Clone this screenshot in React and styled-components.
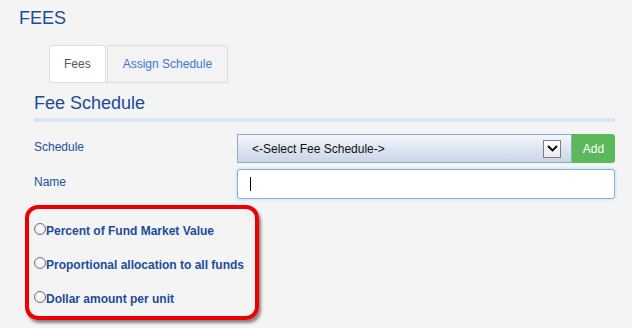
import React from 'react';
import styled, { createGlobalStyle } from 'styled-components';

const Global = createGlobalStyle`
  html, body {
    margin: 0;
    padding: 0;
    background: #f4f4f4;
    font-family: "Liberation Sans", Arial, sans-serif;
  }
`;

const Page = styled.div`
  width: 632px;
  height: 328px;
  padding-top: 8px;
  box-sizing: border-box;
  background: #f4f4f4;
  overflow: hidden;
`;

const Title = styled.h1`
  margin: 0 0 0 19px;
  font-size: 18px;
  line-height: 20px;
  font-weight: normal;
  color: #1b4b9b;
`;

const Tabs = styled.div`
  display: flex;
  gap: 1px;
  margin: 17px 0 0 49px;
`;

const Tab = styled.div`
  height: 38px;
  box-sizing: border-box;
  padding: 0 ${p => (p.active ? 14 : 15)}px;
  display: flex;
  align-items: center;
  font-size: 12px;
  border: 1px solid #dcdcdc;
  border-radius: 3px 3px 0 0;
  background: ${p => (p.active ? '#ffffff' : '#f3f3f3')};
  color: ${p => (p.active ? '#555555' : '#3b78d3')};
`;

const Section = styled.div`
  margin-left: 34px;
  width: 581px;
`;

const Heading = styled.h2`
  margin: 10px 0 0;
  font-size: 18px;
  line-height: 20px;
  font-weight: normal;
  color: #1b4b9b;
`;

const Bar = styled.div`
  margin-top: 5px;
  height: 4px;
  background: #dbe5f3;
`;

const Row = styled.div`
  display: flex;
  align-items: flex-start;
  margin-top: ${p => p.top}px;
`;

const Label = styled.div`
  width: 203px;
  padding-top: 6px;
  font-size: 12px;
  line-height: 14px;
  color: #2350a0;
`;

const Select = styled.div`
  width: 335px;
  height: 29px;
  box-sizing: border-box;
  border: 1px solid #8fa9d3;
  background: linear-gradient(#f4f6fa, #c8d5e8);
  display: flex;
  align-items: center;
  justify-content: space-between;
  padding: 0 10px 0 14px;
  font-size: 12px;
  color: #111;
`;

const Arrow = styled.span`
  width: 18px;
  height: 18px;
  box-sizing: border-box;
  border: 1px solid #7d7d7d;
  background: linear-gradient(#ffffff, #e9e9e9);
  display: flex;
  align-items: center;
  justify-content: center;
`;

const AddButton = styled.button`
  width: 43px;
  height: 29px;
  border: none;
  border-radius: 0 3px 3px 0;
  background: #5cb85c;
  color: #fff;
  font-family: inherit;
  font-size: 12px;
  padding: 0;
`;

const Input = styled.div`
  width: 378px;
  height: 30px;
  box-sizing: border-box;
  border: 1px solid #7fb2e5;
  border-radius: 3px;
  background: #fff;
  box-shadow: 0 0 3px rgba(102, 175, 233, 0.5);
  display: flex;
  align-items: center;
  padding-left: 12px;
`;

const Caret = styled.span`
  width: 1px;
  height: 14px;
  background: #000;
`;

const Highlight = styled.div`
  margin: 6px 0 0 25px;
  width: 234px;
  box-sizing: border-box;
  border: 4px solid #ee0000;
  border-radius: 13px;
  box-shadow: 2px 3px 3px rgba(0, 0, 0, 0.45);
  padding: 14px 5px 13px;
  display: flex;
  flex-direction: column;
  gap: 22px;
`;

const Option = styled.label`
  display: flex;
  align-items: flex-start;
  height: 12px;
`;

const Radio = styled.span`
  width: 12px;
  height: 12px;
  box-sizing: border-box;
  border-radius: 50%;
  border: 1px solid #6f6f6f;
  background: radial-gradient(circle at 50% 40%, #ffffff, #e4e4e4);
  flex: none;
`;

const OptionText = styled.span`
  margin-top: 1px;
  font-size: 12px;
  line-height: 14px;
  font-weight: bold;
  color: #1d4b9b;
  white-space: nowrap;
`;

const options = [
  'Percent of Fund Market Value',
  'Proportional allocation to all funds',
  'Dollar amount per unit',
];

export default function App() {
  return (
    <Page>
      <Global />
      <Title>FEES</Title>
      <Tabs>
        <Tab active>Fees</Tab>
        <Tab>Assign Schedule</Tab>
      </Tabs>
      <Section>
        <Heading>Fee Schedule</Heading>
        <Bar />
        <Row top={12}>
          <Label>Schedule</Label>
          <Select>
            <span>&lt;-Select Fee Schedule-&gt;</span>
            <Arrow>
              <svg width="11" height="7" viewBox="0 0 11 7">
                <path d="M1 1l4.5 4.5L10 1" fill="none" stroke="#000" strokeWidth="1.8" />
              </svg>
            </Arrow>
          </Select>
          <AddButton>Add</AddButton>
        </Row>
        <Row top={6}>
          <Label>Name</Label>
          <Input>
            <Caret />
          </Input>
        </Row>
      </Section>
      <Highlight>
        {options.map(o => (
          <Option key={o}>
            <Radio />
            <OptionText>{o}</OptionText>
          </Option>
        ))}
      </Highlight>
    </Page>
  );
}
